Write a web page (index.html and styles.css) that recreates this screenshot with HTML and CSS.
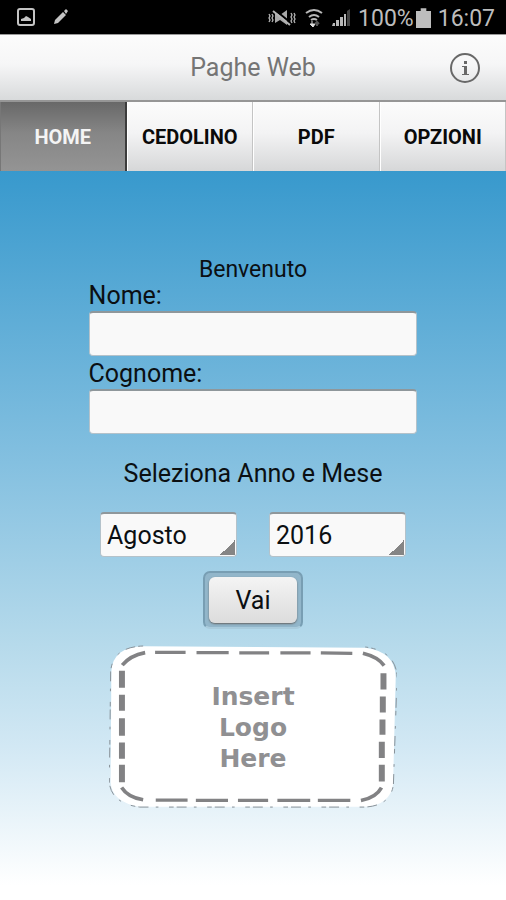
FILE: index.html
```html
<!DOCTYPE html>
<html lang="it">
<head>
    <meta charset="UTF-8">
    <meta name="viewport" content="width=device-width, initial-scale=1.0">
    <title>Paghe Web</title>
    <link rel="stylesheet" href="styles.css">
</head>
<body>
  <div class="statusbar">
    <svg class="status-icon" width="18" height="18" viewBox="0 0 18 18">
      <rect x="1" y="1" width="16" height="16" rx="2" fill="none" stroke="#c4c4c4" stroke-width="2"/>
      <path d="M4 13V11l3-1 2-2 2 1 3 2v2z" fill="#c4c4c4"/>
    </svg>
    <svg class="status-icon" width="16" height="16" viewBox="0 0 16 16">
      <path d="M1 15l1-4 8-8 3 3-8 8zM11 2l2-2 2 2-2 3z" fill="#c4c4c4"/>
    </svg>
    <div class="status-right">
      <svg width="30" height="18" viewBox="0 0 30 18" fill="none" stroke="#b4b4b4">
        <path d="M8 3v11l5-3 7 5V1l-7 5z" fill="#a8a8a8" stroke="none"/>
        <path d="M8 1l16 13" stroke="#000" stroke-width="2"/>
        <path d="M6 2l17 14" stroke-width="2"/>
        <path d="M2 5l1 2-1 2 1 2-1 2M5 5l1 2-1 2 1 2-1 2M24 4l1 2-1 2 1 2-1 2 1 2M27 4l1 2-1 2 1 2-1 2 1 2" stroke-width="1.3"/>
      </svg>
      <svg width="20" height="20" viewBox="0 0 20 20" fill="none" stroke="#b8b8b8" stroke-width="2">
        <path d="M2 5q8-6 16 0M5 9q5-4 10 0M7 12q3-2 6 0"/>
        <path d="M8 13v3M6 16h5l-2 3z" fill="#ddd" stroke="#ddd" stroke-width="1"/>
        <path d="M13 18v-4M11 16l2-2 2 2" stroke="#555"/>
      </svg>
      <svg width="20" height="18" viewBox="0 0 20 18">
        <path d="M2 14h2v3H1zM5 11h3v6H5zM9 8h3v9H9zM13 5h2v12h-2z" fill="#b8b8b8"/>
        <path d="M16 2l3-2v17h-3z" fill="#444"/>
      </svg>
      <span class="battery-text">100%</span>
      <svg width="15" height="21" viewBox="0 0 16 22">
        <path d="M0 3h5V0h6v3h5v18H0z" fill="#bdbdbd"/>
      </svg>
      <span class="clock">16:07</span>
    </div>
  </div>

  <header class="titlebar">
    <h1>Paghe Web</h1>
    <button type="button" class="info" aria-label="Info">
      <svg width="32" height="32" viewBox="0 0 32 32">
        <circle cx="16" cy="16" r="14" fill="none" stroke="#686868" stroke-width="2"/>
        <path d="M15 9h3v3h-3zM13 14h5v8h2v1h-7v-1h2v-7h-2z" fill="#686868"/>
      </svg>
    </button>
  </header>

  <nav class="tabs">
    <a href="#home" class="tab active">HOME</a>
    <a href="#cedolino" class="tab">CEDOLINO</a>
    <a href="#pdf" class="tab">PDF</a>
    <a href="#opzioni" class="tab">OPZIONI</a>
  </nav>

  <main>
    <form class="login">
      <p class="welcome">Benvenuto</p>
      <div class="campi">
        <label for="nome">Nome:</label>
        <input type="text" id="nome" name="nome">
        <label for="cognome">Cognome:</label>
        <input type="text" id="cognome" name="cognome">
      </div>

      <p class="periodo">Seleziona Anno e Mese</p>
      <div class="selects">
        <select id="mese" name="mese" aria-label="Mese">
          <option>Agosto</option>
        </select>
        <select id="anno" name="anno" aria-label="Anno">
          <option>2016</option>
        </select>
      </div>
      <div class="btn-frame">
        <button type="button" class="vai">Vai</button>
      </div>
    </form>

    <!-- logo aziendale -->
    <div class="logo">
      <svg viewBox="27 30 870 495">
        <path d="M130 34Q38 36 34 110L32 445Q36 505 120 518H800Q876 512 884 450L892 125Q890 50 800 38z" fill="#fff"/>
        <path d="M130 33Q38 36 32 110L28 445Q34 508 120 519H800Q878 514 885 450L896 125Q892 48 800 36" fill="none" stroke="#889198" stroke-width="3" stroke-dasharray="14 9 30 22 8 32"/>
        <g fill="none" stroke="#828284">
          <path d="M166 52h92M291 53h97M420 54h90M544 54h91M666 54l95 1M168 498h96M289 499h97M416 499h91M535 499h99M657 499h98" stroke-width="10"/>
          <path d="M66 108v51M66 180v48M66 251v53M66 324v49M66 391v53M855 115v49M853 185v49M852 255v46M850 322v49M850 391v51" stroke-width="18"/>
          <path d="M67 91Q90 62 136 53M793 55Q838 66 857 92M65 460Q84 490 130 497M787 499Q833 490 849 460" stroke-width="11"/>
        </g>
      </svg>
      <p>Insert<br>Logo<br>Here</p>
    </div>
  </main>
</body>
</html>
```
FILE: styles.css
```css
* {
    box-sizing: border-box;
}

body {
    margin: 0;
    min-height: 100vh;
    display: flex;
    flex-direction: column;
    font-family: Roboto, sans-serif;
    font-size: 25px;
    color: #0b0f12;
}

p, h1 {
    margin: 0;
    font-weight: normal;
}

.statusbar {
    display: flex;
    align-items: center;
    gap: 18px;
    height: 34px;
    padding: 0 11px 0 17px;
    background: #000;
    color: #bdbdbd;
    font-size: 23px;
}

.status-right {
    display: flex;
    align-items: center;
    gap: 7px;
    margin-left: auto;
    padding-top: 2px;
}

.battery-text {
    margin-right: -5px;
}

/* barra del titolo */
.titlebar {
    display: grid;
    grid-template-columns: 1fr auto 1fr;
    align-items: center;
    height: 68px;
    padding: 0 25px;
    background: linear-gradient(#fcfcfc, #f6f6f7 45%, #d8dadb);
    border-top: 1px solid #999;
    border-bottom: 2px solid #969696;
}

.titlebar h1 {
    grid-column: 2;
    font-size: 25px;
    color: #757575;
}

.info {
    justify-self: end;
    display: flex;
    padding: 0;
    border: none;
    background: none;
    cursor: pointer;
}

.tabs {
    display: grid;
    grid-template-columns: repeat(4, 1fr);
    height: 69px;
}

.tab {
    display: flex;
    align-items: center;
    justify-content: center;
    background: linear-gradient(#fcfcfc, #f3f3f4 45%, #d6d7d8);
    border-left: 1px solid #fff;
    border-right: 1px solid #c4c4c4;
    color: #0a0a0a;
    font-size: 20px;
    font-weight: bold;
    text-decoration: none;
}

.tab.active {
    background: linear-gradient(#686868, #868686 45%, #949494);
    border-left: 1px solid #777;
    border-right: 2px solid #3c3c3c;
    color: #f4f4f4;
}

main {
    flex: 1;
    display: flex;
    flex-direction: column;
    align-items: center;
    padding-top: 87px;
    background: linear-gradient(#3899cd, #84c0e0 40%, #b6daeb 65%, #d2e8f4 79%, #fff 98%);
}

.login {
    width: 65%;
    display: flex;
    flex-direction: column;
    align-items: center;
}

.welcome {
    font-size: 23px;
    line-height: 24px;
}

.campi {
    width: 100%;
}

.campi label {
    display: block;
    line-height: 27px;
}

input, select {
    height: 45px;
    border: 1px solid #b4c2ca;
    border-top: 2px solid #8f979b;
    border-radius: 4px;
    background-color: #f9f9f9;
    font-family: inherit;
    font-size: 25px;
    color: #0b0f12;
}

.campi input {
    display: block;
    width: 100%;
    margin: 2px 0;
    padding: 0 8px;
}

.campi input + label {
    margin-top: 4px;
}

.periodo {
    margin-top: 24px;
    line-height: 28px;
}

.selects {
    display: flex;
    gap: 32px;
    width: 93%;
    margin-top: 24px;
}

.selects select {
    flex: 1;
    min-width: 0;
    padding: 0 6px;
    appearance: none;
    background-image: linear-gradient(135deg, transparent 50%, #858585 50%);
    background-size: 15px 15px;
    background-position: right 1px bottom 1px;
    background-repeat: no-repeat;
}

.btn-frame {
    margin-top: 14px;
    padding: 4px;
    border: 2px solid #789eb3;
    border-bottom-color: #a9cbdc;
    border-radius: 7px;
    background: #92b6ca;
}

.vai {
    display: block;
    height: 46px;
    width: 88px;
    padding: 0;
    border: none;
    border-radius: 6px;
    background: linear-gradient(#f4f4f4, #dcdcdc);
    box-shadow: 0 1px 2px #666;
    font-family: inherit;
    font-size: 25px;
    color: #0b0f12;
    cursor: pointer;
}

.logo {
    display: grid;
    width: 57%;
    margin: 16px 0 24px;
    align-items: center;
}

.logo svg, .logo p {
    grid-area: 1 / 1;
}

.logo svg {
    display: block;
    width: 100%;
}

.logo p {
    font-family: "DejaVu Sans", sans-serif;
    font-size: 25px;
    font-weight: bold;
    line-height: 31px;
    color: #909092;
    text-align: center;
}
```
